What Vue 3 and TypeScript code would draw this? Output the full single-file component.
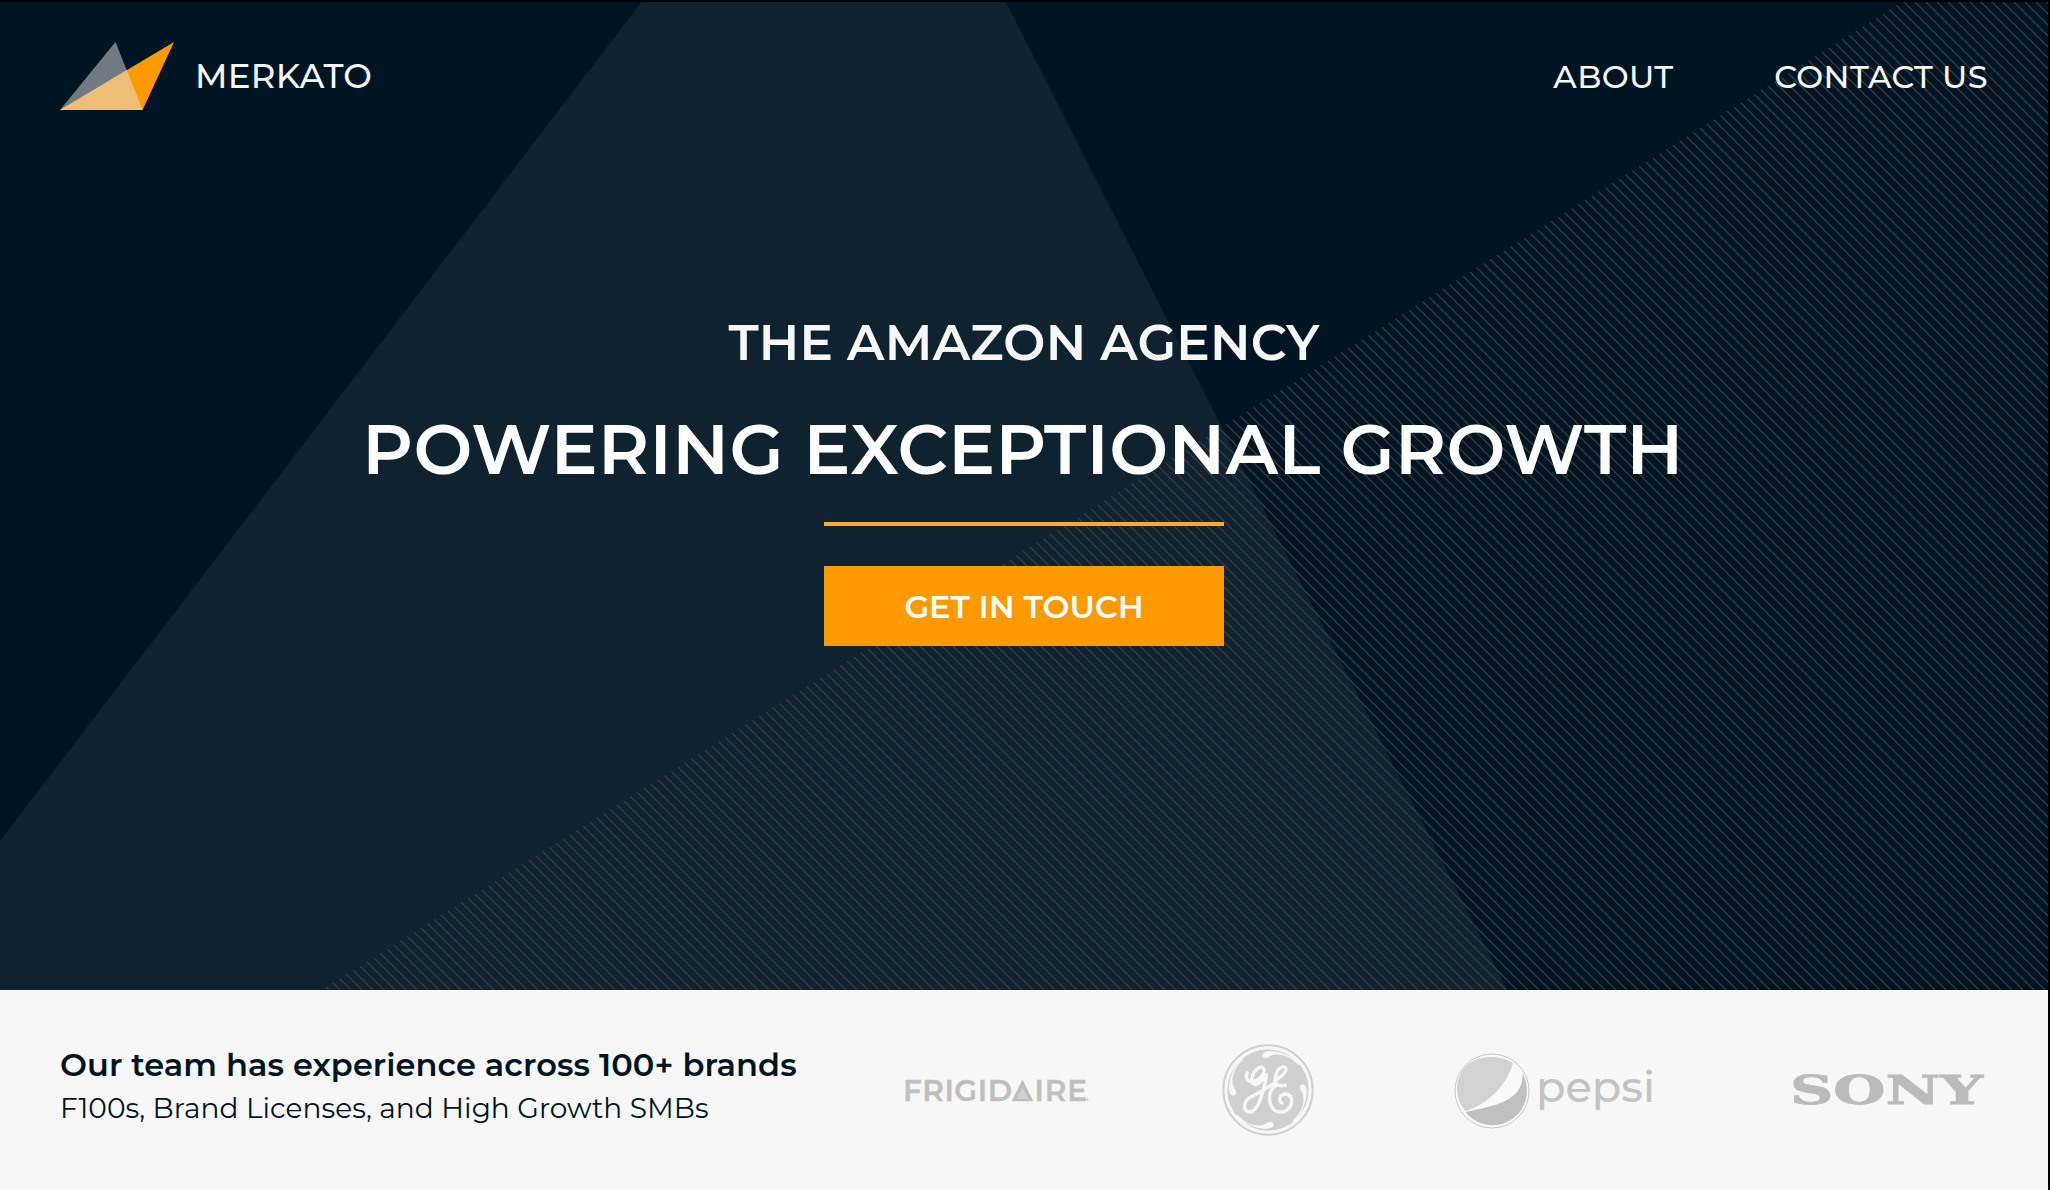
<script setup lang="ts">
const stripeGap = 11
const stripes: string = Array.from({ length: 260 }, (_, i) => {
  const offset = -694 + i * stripeGap
  return `M${offset} 0l990 990`
}).join('')
const petals: number[] = [0, 90, 180, 270]
const links: string[] = ['ABOUT', 'CONTACT US']
</script>

<template>
  <div class="page">
    <section class="hero">
      <svg class="backdrop" width="2048" height="988" viewBox="0 2 2048 988" aria-hidden="true">
        <defs>
          <clipPath id="slope"><path d="M1905 0L318 992H2048V0z" /></clipPath>
        </defs>
        <path d="M643 0H1005L1507.500 990H0V841z" fill="#0f2230" />
        <path :d="stripes" clip-path="url(#slope)" fill="none" stroke="#3c3b3d" stroke-width="1.300" />
      </svg>

      <header class="bar">
        <a class="brand">
          <svg width="114" height="68" viewBox="0 0 114 68">
            <path d="M0 68L55.500 0L82.500 68z" fill="#717a83" />
            <path d="M0 68L114 0L82.500 68z" fill="#ff9900" />
            <path d="M0 68L66.800 28L82.500 68z" fill="#f0be75" />
          </svg>
          <span class="name">MERKATO</span>
        </a>
        <nav class="links">
          <a v-for="link in links" :key="link">{{ link }}</a>
        </nav>
      </header>

      <div class="pitch">
        <h2 class="kicker">THE AMAZON AGENCY</h2>
        <h1 class="headline">POWERING EXCEPTIONAL GROWTH</h1>
        <div class="rule"></div>
        <button class="cta" type="button">GET IN TOUCH</button>
      </div>
    </section>

    <footer class="brands">
      <div class="copy">
        <p class="lead">Our team has experience across 100+ brands</p>
        <p class="sub">F100s, Brand Licenses, and High Growth SMBs</p>
      </div>

      <svg class="frigidaire" width="184" height="40">
        <text x="-2" y="31" textLength="109" lengthAdjust="spacing">FRIGID</text>
        <path d="M117.500 10L128 31H107z" />
        <path d="M117.500 18L123.500 29H111.500z" fill="#d2d2d2" stroke="none" />
        <text x="129.500" y="31" textLength="52.500" lengthAdjust="spacing">IRE</text>
        <circle cx="182.500" cy="29.500" r="0.800" />
      </svg>

      <svg class="ge" width="92" height="92" viewBox="-138 -138 276 276">
        <circle r="134" fill="none" stroke="#d0d0d0" stroke-width="6" />
        <circle r="122" fill="#d0d0d0" />
        <g fill="#f7f7f7">
          <path
            v-for="angle in petals"
            :key="angle"
            :transform="`rotate(${angle})`"
            d="M-17-104C-16-119 18-124 67-100L77-99L64-107C40-119 10-124-2-122L40-120L100-78L91-75C67-101 34-114 7-102C-4-92-17-94-17-104z"
          />
        </g>
        <g fill="none" stroke="#f7f7f7" stroke-width="10" stroke-linecap="round" stroke-linejoin="round">
          <path d="M-62-51C-70-39-62-24-47-25C-25-27-7-50-13-64C-20-78-43-60-48-38C-52-20-41-12-29-20C-19-27-10-39-5-46C-7-22-14 3-22 25C-32 54-45 69-60 65C-77 58-71 31-53 22C-30 10-7-3 17-19" />
          <path d="M52-14C31-10 17-17 25-29C33-38 55-48 54-62C52-76 32-70 26-52C20-32 17-19 29-15C8-8 0 15 7 41C14 67 43 74 61 57C79 38 71 11 51 12C34 13 30 34 42 39" />
        </g>
      </svg>

      <svg class="pepsi" width="202" height="78" viewBox="1454 1052 202 78">
        <circle cx="1492" cy="1091" r="37" fill="#fafafa" stroke="#c6c6c6" />
        <path d="M1465.500 1111C1450 1094 1457 1065 1478 1059C1490 1055 1504 1057 1513 1063C1508 1082 1491 1103 1465.500 1111z" fill="#d2d2d2" />
        <path d="M1465.500 1112C1493 1106 1524 1102 1522.500 1073C1532 1091 1526 1113 1507 1122C1491 1129 1475 1124 1465.500 1112z" fill="#c0c0c0" />
        <text x="1536" y="1102" textLength="119" lengthAdjust="spacingAndGlyphs" fill="#c3c3c3">pepsi</text>
      </svg>

      <svg class="sony" width="190" height="46">
        <text x="-3" y="36" textLength="193" lengthAdjust="spacingAndGlyphs">SONY</text>
      </svg>
    </footer>
  </div>
</template>

<style>
body {
  margin: 0;
  background: #000;
}
</style>

<style scoped>
.page {
  box-sizing: border-box;
  width: 2050px;
  height: 1190px;
  padding: 2px 2px 0 0;
  overflow: hidden;
  background: #000;
  color: #f7f7f7;
  font-family: Montserrat, Inter, "Liberation Sans", sans-serif;
  white-space: nowrap;
}

.page svg {
  display: block;
  flex: none;
}

.hero {
  position: relative;
  height: 988px;
  background: #001524;
}

.backdrop {
  position: absolute;
  inset: 0;
}

.bar {
  position: relative;
  display: flex;
  justify-content: space-between;
  padding: 40px 60px 0;
  line-height: 48px;
}

.brand {
  display: flex;
  gap: 21px;
}

.name {
  margin-top: 10px;
  font-size: 34px;
  font-weight: 500;
  letter-spacing: 0.250px;
}

.links {
  display: flex;
  gap: 101px;
  padding-top: 11px;
  font-size: 32px;
  font-weight: 500;
  letter-spacing: 0.350px;
}

.pitch {
  position: relative;
  display: flex;
  flex-direction: column;
  align-items: center;
  padding-top: 202px;
}

.kicker {
  margin: 0;
  font-size: 50px;
  font-weight: 600;
  letter-spacing: 0.200px;
  line-height: 61px;
}

.headline {
  margin: 34px 2px 0 0;
  color: #fff;
  font-size: 70px;
  font-weight: 600;
  letter-spacing: 0.400px;
  line-height: 85px;
}

.rule {
  width: 400px;
  height: 4px;
  margin-top: 30px;
  background: #ffaa2f;
}

.cta {
  width: 400px;
  height: 80px;
  margin-top: 40px;
  padding: 0;
  border: 0;
  background: #ff9900;
  color: #fff;
  font-family: inherit;
  font-size: 32px;
  font-weight: 600;
}

.brands {
  display: flex;
  height: 200px;
  background: #f7f7f7;
}

.copy {
  box-sizing: border-box;
  width: 845px;
  padding: 53px 0 0 60px;
  color: #001524;
  line-height: 43px;
}

.copy p {
  margin: 0;
}

.lead {
  font-size: 32px;
  font-weight: 600;
  letter-spacing: 0.070px;
}

.copy .sub {
  margin-top: 1px;
  font-size: 28px;
  font-weight: 400;
  letter-spacing: 0.050px;
}

.frigidaire {
  margin: 80px 133px 0 60px;
  overflow: visible;
  fill: #bfbfbf;
  stroke: #bfbfbf;
  stroke-width: 0.400px;
  font-size: 29.500px;
  font-weight: 600;
}

.ge {
  margin: 54px 140px 0 0;
}

.pepsi {
  margin: 62px 137px 0 0;
  overflow: visible;
  font-size: 42px;
  font-weight: 500;
}

.sony {
  margin-top: 78px;
  overflow: visible;
  fill: #bbb;
  stroke: #bbb;
  stroke-width: 0.800px;
  font-family: "DejaVu Serif", serif;
  font-size: 39px;
  font-weight: 700;
}
</style>
